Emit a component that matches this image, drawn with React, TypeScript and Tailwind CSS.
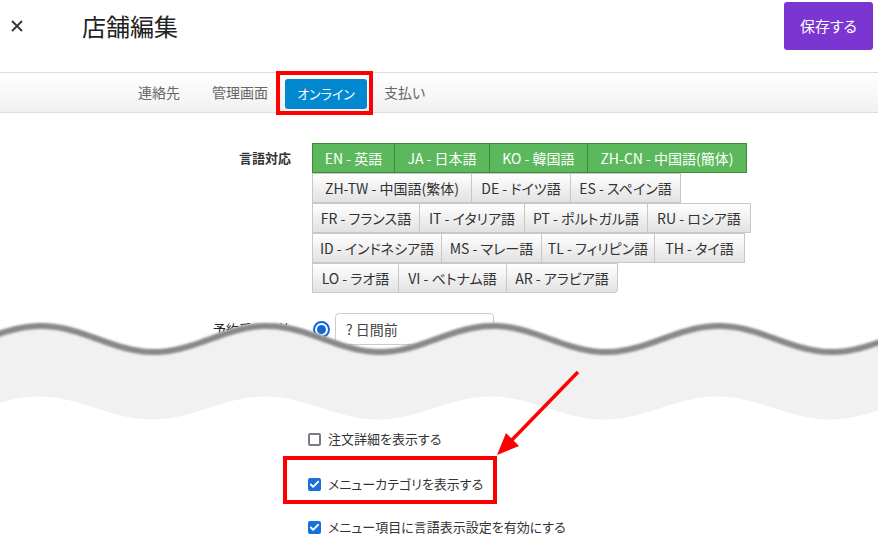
import { Check } from 'lucide-react'

type Lang = { label: string; w: string; on?: boolean }

// rows of the language picker, widths read off the screen
const langRows: Lang[][] = [
  [
    { label: 'EN - 英語', w: 'w-[83px]', on: true },
    { label: 'JA - 日本語', w: 'w-[95px]', on: true },
    { label: 'KO - 韓国語', w: 'w-[98px]', on: true },
    { label: 'ZH-CN - 中国語(簡体)', w: 'w-[159px]', on: true },
  ],
  [
    { label: 'ZH-TW - 中国語(繁体)', w: 'w-[160px]' },
    { label: 'DE - ドイツ語', w: 'w-[99px]' },
    { label: 'ES - スペイン語', w: 'w-[110px]' },
  ],
  [
    { label: 'FR - フランス語', w: 'w-[108px]' },
    { label: 'IT - イタリア語', w: 'w-[105px]' },
    { label: 'PT - ポルトガル語', w: 'w-[123px]' },
    { label: 'RU - ロシア語', w: 'w-[103px]' },
  ],
  [
    { label: 'ID - インドネシア語', w: 'w-[130px]' },
    { label: 'MS - マレー語', w: 'w-[100px]' },
    { label: 'TL - フィリピン語', w: 'w-[113px]' },
    { label: 'TH - タイ語', w: 'w-[90px]' },
  ],
  [
    { label: 'LO - ラオ語', w: 'w-[87px]' },
    { label: 'VI - ベトナム語', w: 'w-[108px]' },
    { label: 'AR - アラビア語', w: 'w-[111px]' },
  ],
]

// torn-page wave
const PERIOD = 226
const topY = (x: number) => 36 - 13 * Math.cos((2 * Math.PI * (x - 267)) / PERIOD)
const botY = (x: number) => 108 - 11.5 * Math.cos((2 * Math.PI * (x - 265)) / PERIOD)

const xs: number[] = []
for (let x = -10; x <= 890; x += 3) xs.push(x)
const topPath = xs.map((x, i) => `${i === 0 ? 'M' : 'L'}${x} ${topY(x).toFixed(2)}`).join(' ')
const fillPath =
  topPath +
  ' ' +
  [...xs].reverse().map((x) => `L${x} ${botY(x).toFixed(2)}`).join(' ') +
  ' Z'

function CheckRow({ checked, label }: { checked: boolean; label: string }) {
  return (
    <div className="flex items-center h-[20px]">
      {checked ? (
        <span className="w-[13px] h-[13px] rounded-[2px] bg-[#1a6fe0] flex items-center justify-center">
          <Check className="w-[11px] h-[11px] text-white" strokeWidth={4} />
        </span>
      ) : (
        <span className="w-[13px] h-[13px] rounded-[2px] border-2 border-[#7a7a84] bg-white" />
      )}
      <span className="ml-[7px] text-[13px] text-[#333]">{label}</span>
    </div>
  )
}

export default function App() {
  return (
    <div className="relative w-[878px] h-[557px] overflow-hidden bg-white text-[#333] font-['Noto_Sans_CJK_JP',sans-serif] [font-feature-settings:'palt']">
      {/* header */}
      <div className="h-[72px]">
        <div className="flex items-center h-[52px]">
          <svg className="ml-[11px]" width="12" height="12" viewBox="0 0 12 12">
            <path d="M1 1 11 11 M11 1 1 11" stroke="#333" strokeWidth="1.8" />
          </svg>
          <h1 className="ml-[59px] text-[24px] leading-none font-normal text-[#222]">店舗編集</h1>
          <button className="ml-auto mr-[5px] w-[89px] h-[48px] rounded-[3px] bg-[#7b35d1] text-white text-[15px]">
            保存する
          </button>
        </div>
      </div>

      {/* tabs */}
      <div className="h-[41px] border-y border-[#dcdcdc] bg-gradient-to-b from-white to-[#f1f1f1] flex items-center pl-[138px] text-[14px] text-[#666]">
        <span>連絡先</span>
        <span className="ml-[32px]">管理画面</span>
        <span className="ml-[17px] mt-[2px] w-[82px] h-[30px] rounded-[3px] bg-[#0288d1] text-white text-[13px] flex items-center justify-center">
          オンライン
        </span>
        <span className="ml-[17px]">支払い</span>
      </div>

      {/* form */}
      <div className="pt-[30px]">
        <div className="flex">
          <div className="w-[291px] text-right text-[13px] font-bold leading-[30px] text-[#333]">言語対応</div>
          <div className="ml-[21px] flex flex-col">
            {langRows.map((row, ri) => (
              <div key={ri} className="flex">
                {row.map((l, i) => (
                  <div
                    key={l.label}
                    className={`${l.w} h-[30px] flex items-center justify-center text-[14px] border-y border-r ${
                      i === 0 ? 'border-l' : ''
                    } ${
                      l.on
                        ? 'bg-[#5cb85c] border-[#3f8a35] text-white'
                        : 'bg-gradient-to-b from-white to-[#e2e2e2] border-[#c8c8c8] text-[#333]'
                    } ${ri === 4 && i === row.length - 1 ? 'rounded-br-[4px]' : ''}`}
                  >
                    {l.label}
                  </div>
                ))}
              </div>
            ))}
          </div>
        </div>

        <div className="flex items-center mt-[20px]">
          <div className="w-[291px] text-right text-[13px] text-[#222]">予約受付開始</div>
          <span className="ml-[22px] w-[17px] h-[17px] rounded-full border-2 border-[#1565d8] flex items-center justify-center">
            <span className="w-[9px] h-[9px] rounded-full bg-[#1565d8]" />
          </span>
          <div className="ml-[5px] w-[159px] h-[32px] rounded-[4px] border border-[#ccc] flex items-center pl-[10px] text-[14px] text-[#444]">
            ? 日間前
          </div>
        </div>

        <div className="pl-[308px] mt-[84px]">
          <CheckRow checked={false} label="注文詳細を表示する" />
          <div className="mt-[25px]">
            <CheckRow checked label="メニューカテゴリを表示する" />
          </div>
          <div className="mt-[23px]">
            <CheckRow checked label="メニュー項目に言語表示設定を有効にする" />
          </div>
        </div>
      </div>

      {/* torn edge */}
      <svg className="absolute left-0 top-[300px]" width="878" height="140" viewBox="0 0 878 140">
        <defs>
          <filter id="soft" x="-5%" y="-50%" width="110%" height="200%">
            <feGaussianBlur stdDeviation="0.9" />
          </filter>
        </defs>
        <path d={fillPath} fill="#f1f1f1" />
        <path d={topPath} transform="translate(0 3)" fill="none" stroke="#888" strokeWidth="6" filter="url(#soft)" />
      </svg>

      {/* annotations */}
      <div className="absolute left-[276px] top-[71px] w-[97px] h-[44px] border-4 border-[#f00]" />
      <div className="absolute left-[283px] top-[456px] w-[214px] h-[48px] border-4 border-[#f00]" />
      <svg className="absolute left-0 top-0" width="878" height="557" viewBox="0 0 878 557">
        <line x1="578" y1="372" x2="508" y2="444" stroke="#f00" strokeWidth="3.5" />
        <polygon points="497,455 519,446 506,433" fill="#f00" />
      </svg>
    </div>
  )
}
